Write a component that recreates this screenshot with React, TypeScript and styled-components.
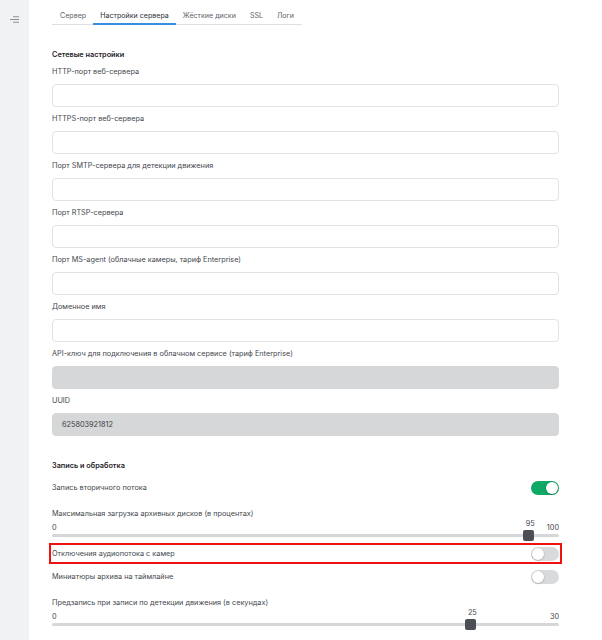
import React from 'react';
import styled, { createGlobalStyle } from 'styled-components';

const GlobalStyle = createGlobalStyle`
  html, body {
    margin: 0;
    padding: 0;
    background: #ffffff;
  }
  body {
    font-family: Inter, "Noto Sans", "DejaVu Sans", sans-serif;
    color: #3b3e44;
  }
`;

const tabs = ['Сервер', 'Настройки сервера', 'Жёсткие диски', 'SSL', 'Логи'];

const networkFields: { label: string; value?: string; disabled?: boolean }[] = [
  { label: 'HTTP-порт веб-сервера' },
  { label: 'HTTPS-порт веб-сервера' },
  { label: 'Порт SMTP-сервера для детекции движения' },
  { label: 'Порт RTSP-сервера' },
  { label: 'Порт MS-agent (облачные камеры, тариф Enterprise)' },
  { label: 'Доменное имя' },
  { label: 'API-ключ для подключения в облачном сервисе (тариф Enterprise)', disabled: true },
  { label: 'UUID', value: '625803921812', disabled: true },
];

function Toggle({ on }: { on?: boolean }) {
  return (
    <ToggleTrack $on={on}>
      <ToggleKnob $on={on} />
    </ToggleTrack>
  );
}

function Slider({ min, max, value }: { min: number; max: number; value: number }) {
  const ratio = (value - min) / (max - min);
  const left = `calc(${ratio} * (100% - 11px))`;
  return (
    <SliderBox>
      <SliderEdge>{min}</SliderEdge>
      <SliderEdge>{max}</SliderEdge>
      <SliderTrack />
      <SliderThumb style={{ left }} />
      <SliderValue style={{ left: `calc(${ratio} * (100% - 11px) + 7px)` }}>{value}</SliderValue>
    </SliderBox>
  );
}

function App() {
  return (
    <>
      <GlobalStyle />
      <Layout>
        <SideBar>
          <svg width="9" height="7" viewBox="0 0 9 7" fill="none">
            <path d="M3 0.75H9M0 3.5H9M3 6.25H9" stroke="#8c8f95" strokeWidth="1" />
          </svg>
        </SideBar>
        <Main>
          <TabBar>
            {tabs.map((t, i) => (
              <Tab key={t} $active={i === 1}>
                {t}
              </Tab>
            ))}
          </TabBar>

          <SectionTitle $top={24} $bottom={5}>
            Сетевые настройки
          </SectionTitle>
          {networkFields.map((f) => (
            <Field key={f.label}>
              <Label>{f.label}</Label>
              <Input $disabled={f.disabled}>{f.value}</Input>
            </Field>
          ))}

          <SectionTitle $top={18}>Запись и обработка</SectionTitle>
          <SettingRow>
            <Label>Запись вторичного потока</Label>
            <Toggle on />
          </SettingRow>
          <SliderGroup>
            <Label>Максимальная загрузка архивных дисков (в процентах)</Label>
            <Slider min={0} max={100} value={95} />
          </SliderGroup>
          <Highlight>
            <Label>Отключения аудиопотока с камер</Label>
            <Toggle />
          </Highlight>
          <SettingRow $top={3}>
            <Label>Миниатюры архива на таймлайне</Label>
            <Toggle />
          </SettingRow>
          <SliderGroup>
            <Label>Предзапись при записи по детекции движения (в секундах)</Label>
            <Slider min={0} max={30} value={25} />
          </SliderGroup>
        </Main>
      </Layout>
    </>
  );
}

export default App;

const Layout = styled.div`
  display: flex;
  min-height: 640px;
`;

const SideBar = styled.aside`
  width: 29px;
  flex-shrink: 0;
  background: #f1f2f4;
  display: flex;
  justify-content: center;
  padding-top: 16px;
  box-sizing: border-box;
`;

const Main = styled.main`
  flex: 1;
  padding: 5px 43px 0 23px;
  display: flex;
  flex-direction: column;
`;

const TabBar = styled.nav`
  display: flex;
  align-self: flex-start;
  width: 250px;
  border-bottom: 1px solid #dfe0e3;
  padding-left: 1px;
  box-sizing: border-box;
`;

const Tab = styled.div<{ $active?: boolean }>`
  height: 20px;
  padding: 0 7px;
  display: flex;
  align-items: center;
  font-size: 7.1px;
  color: ${(p) => (p.$active ? '#2b2f36' : '#5e6168')};
  box-shadow: ${(p) => (p.$active ? 'inset 0 -2px 0 #3391e0' : 'none')};
  margin-bottom: -1px;
  white-space: nowrap;
`;

const SectionTitle = styled.h3<{ $top?: number; $bottom?: number }>`
  margin: ${(p) => p.$top ?? 21}px 0 ${(p) => p.$bottom ?? 6}px;
  height: 12px;
  line-height: 12px;
  font-size: 7.3px;
  font-weight: 600;
  color: #1f2227;
`;

const Field = styled.div`
  display: flex;
  flex-direction: column;
  gap: 6px;
  margin-bottom: 6px;
`;

const Label = styled.div`
  height: 12px;
  line-height: 12px;
  font-size: 7.3px;
  color: #44474d;
  white-space: nowrap;
`;

const Input = styled.div<{ $disabled?: boolean }>`
  height: 23px;
  box-sizing: border-box;
  border: 1px solid ${(p) => (p.$disabled ? '#d6d7d9' : '#e1e2e5')};
  background: ${(p) => (p.$disabled ? '#d6d7d9' : '#ffffff')};
  border-radius: 4px;
  padding: 0 9px;
  display: flex;
  align-items: center;
  font-size: 7.3px;
  color: #3a3d43;
`;

const SettingRow = styled.div<{ $top?: number }>`
  height: 20px;
  margin-top: ${(p) => p.$top ?? 0}px;
  display: flex;
  align-items: center;
  justify-content: space-between;
`;

const Highlight = styled.div`
  height: 21px;
  box-sizing: border-box;
  margin: 0 -3px;
  padding: 0 1px 0 1px;
  border: 2px solid #ee1111;
  display: flex;
  align-items: center;
  justify-content: space-between;
`;

const SliderGroup = styled.div`
  margin-top: 10px;
  display: flex;
  flex-direction: column;
  gap: 2px;
`;

const ToggleTrack = styled.div<{ $on?: boolean }>`
  width: 28px;
  height: 14px;
  border-radius: 7px;
  background: ${(p) => (p.$on ? '#0fa865' : '#d9dadc')};
  position: relative;
  flex-shrink: 0;
`;

const ToggleKnob = styled.div<{ $on?: boolean }>`
  position: absolute;
  top: 1px;
  left: ${(p) => (p.$on ? '15px' : '1px')};
  width: 12px;
  height: 12px;
  border-radius: 50%;
  background: #ffffff;
  box-shadow: 0 0.5px 1.5px rgba(0, 0, 0, 0.35);
`;

const SliderBox = styled.div`
  position: relative;
  height: 21px;
  display: flex;
  justify-content: space-between;
  align-items: flex-start;
`;

const SliderEdge = styled.span`
  font-size: 7.3px;
  line-height: 12px;
  color: #44474d;
`;

const SliderTrack = styled.div`
  position: absolute;
  left: 0;
  right: 0;
  top: 12px;
  height: 3px;
  border-radius: 2px;
  background: #d6d7d9;
`;

const SliderThumb = styled.div`
  position: absolute;
  top: 8px;
  width: 11px;
  height: 11px;
  border-radius: 2px;
  background: #4b4e55;
`;

const SliderValue = styled.span`
  position: absolute;
  top: -4px;
  transform: translateX(-50%);
  font-size: 7.3px;
  line-height: 12px;
  color: #44474d;
`;
